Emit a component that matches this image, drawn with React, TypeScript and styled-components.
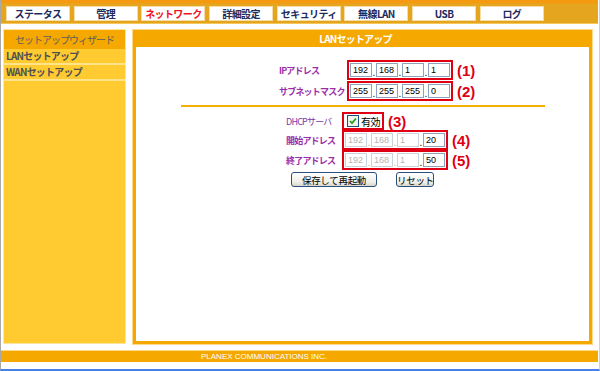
import React from "react";
import styled, { createGlobalStyle } from "styled-components";

const GlobalStyle = createGlobalStyle`
  html, body {
    margin: 0;
    padding: 0;
    background: #ffffff;
  }
  body {
    font-family: "Noto Sans CJK JP", "Liberation Sans", sans-serif;
    font-size: 10px;
    white-space: nowrap;
  }
`;

const jpFont = `"Noto Sans CJK JP", "Liberation Sans", sans-serif`;

const Page = styled.div`
  width: 600px;
  height: 371px;
  box-sizing: border-box;
  border-left: 1px solid #a8a8a8;
  border-right: 1px solid #d0d0d0;
  border-bottom: 2px solid #4a7ee8;
  display: flex;
  flex-direction: column;
  overflow: hidden;
`;

const TopBar = styled.div`
  height: 24px;
  margin-right: 1px;
  box-sizing: border-box;
  background: linear-gradient(#f39a10 0px, #f39a10 3px, #e6a620 4px, #e3a41e 100%);
  border-bottom: 1px solid #f7c65a;
  display: flex;
  gap: 3.7px;
  padding: 6px 0 0 5px;
`;

const Tab = styled.div<{ $active?: boolean }>`
  width: 64px;
  height: 15px;
  box-sizing: border-box;
  background: #ffffff;
  border: 1px solid #f6dca6;
  display: flex;
  align-items: center;
  justify-content: center;
  font-family: ${jpFont};
  font-size: 10px;
  font-weight: bold;
  letter-spacing: -0.6px;
  color: ${(p) => (p.$active ? "#ee1122" : "#1c2a5c")};
`;

const Content = styled.div`
  display: flex;
  gap: 6px;
  padding: 5px 0 0 2px;
  height: 316px;
  box-sizing: border-box;
`;

const Sidebar = styled.div`
  width: 123px;
  height: 315px;
  box-sizing: border-box;
  background: #ffcb30;
  border: 1px solid #ffe4a0;
  display: flex;
  flex-direction: column;
`;

const SideHeader = styled.div`
  height: 19px;
  background: #f5a800;
  display: flex;
  align-items: center;
  justify-content: center;
  color: #5e5e5e;
  font-size: 10px;
  letter-spacing: -1px;
`;

const SideItem = styled.div`
  height: 14px;
  line-height: 14px;
  padding-left: 2px;
  border-bottom: 2px solid #ffe48c;
  color: #505050;
  font-size: 10px;
  font-weight: bold;
  letter-spacing: -0.8px;
`;

const Panel = styled.div`
  width: 461px;
  height: 316px;
  box-sizing: border-box;
  background: #f5a800;
  border: 1px solid #ffd98a;
  display: flex;
  flex-direction: column;
`;

const PanelHeader = styled.div`
  height: 17px;
  display: flex;
  align-items: center;
  justify-content: center;
  padding-right: 14px;
  color: #ffffff;
  font-size: 10px;
  font-weight: bold;
  letter-spacing: -0.8px;
`;

const PanelBody = styled.div`
  flex: 1;
  margin: 0 3px 3px 3px;
  background: #ffffff;
  padding-top: 13px;
`;

const FormGrid = styled.div<{ $left: number; $labelW: number; $rowGap?: number }>`
  display: grid;
  grid-template-columns: ${(p) => p.$labelW}px auto;
  column-gap: 3px;
  row-gap: ${(p) => p.$rowGap ?? 1}px;
  align-items: center;
  padding-left: ${(p) => p.$left}px;
`;

const Label = styled.div<{ $light?: boolean }>`
  color: ${(p) => (p.$light ? "#7a3aa8" : "#9a2fa8")};
  font-size: 9px;
  letter-spacing: -0.8px;
  font-weight: ${(p) => (p.$light ? "normal" : "bold")};
`;

const Field = styled.div`
  display: flex;
  align-items: center;
  gap: 4px;
`;

const RedBox = styled.div`
  display: flex;
  align-items: center;
  box-sizing: border-box;
  height: 20px;
  border: 2px solid #e00014;
  padding: 0 1px;
`;

const Octet = styled.div<{ $disabled?: boolean }>`
  width: 22px;
  height: 14px;
  box-sizing: border-box;
  border: 1px solid ${(p) => (p.$disabled ? "#c9d3dd" : "#8ca3bf")};
  font-family: "Liberation Sans", sans-serif;
  font-size: 9px;
  line-height: 12px;
  padding-left: 2px;
  color: ${(p) => (p.$disabled ? "#b4b4b4" : "#000000")};
  background: #ffffff;
  overflow: hidden;
`;

const Dot = styled.span<{ $disabled?: boolean }>`
  width: 4px;
  align-self: flex-end;
  text-align: center;
  font-size: 10px;
  line-height: 10px;
  color: ${(p) => (p.$disabled ? "#b4b4b4" : "#000000")};
  font-family: "Liberation Sans", sans-serif;
`;

const Marker = styled.span`
  color: #e00014;
  font-family: "Liberation Sans", sans-serif;
  font-size: 15px;
  font-weight: bold;
  line-height: 15px;
`;

const Separator = styled.div`
  height: 2px;
  background: #f5b000;
  margin: 4px 44px 5px 45px;
`;

const CheckBox = styled.div`
  display: flex;
  align-items: center;
  gap: 2px;
  height: 18px;
  box-sizing: border-box;
  border: 2px solid #e00014;
  padding: 0 2px 0 3px;
  font-size: 10px;
  letter-spacing: -0.5px;
  color: #000000;
`;

const ButtonRow = styled.div`
  display: flex;
  justify-content: center;
  gap: 19px;
  margin-top: 2px;
`;

const Button = styled.button<{ $w: number }>`
  width: ${(p) => p.$w}px;
  height: 15px;
  padding: 0;
  border: 1px solid #2b4f7e;
  border-radius: 3px;
  background: linear-gradient(#ffffff, #f0efe8 70%, #d8d5c8);
  font-family: ${jpFont};
  font-size: 9.5px;
  line-height: 12px;
  letter-spacing: -0.3px;
  white-space: nowrap;
  color: #000000;
`;

const Footer = styled.div`
  margin: 10px 1px 0 0;
  height: 11px;
  background: #f5a800;
  border-top: 1px solid #ffd98a;
  color: #ffffff;
  font-family: "Liberation Sans", sans-serif;
  font-size: 8px;
  line-height: 11px;
  padding-left: 200px;
`;

const tabs = ["ステータス", "管理", "ネットワーク", "詳細設定", "セキュリティ", "無線LAN", "USB", "ログ"];

function CheckIcon() {
  return (
    <svg width="12" height="12" viewBox="0 0 12 12">
      <rect x="0.5" y="0.5" width="11" height="11" fill="#f2f2ee" stroke="#1c5180" />
      <path d="M3 6 L5 8.2 L9 3.5" fill="none" stroke="#21a121" strokeWidth="1.8" />
    </svg>
  );
}

function IpField({ values, disabled }: { values: string[]; disabled?: boolean }) {
  return (
    <RedBox>
      {values.map((v, i) => (
        <React.Fragment key={i}>
          {i > 0 && <Dot $disabled={disabled && i < 3}>.</Dot>}
          <Octet $disabled={disabled && i < 3}>{v}</Octet>
        </React.Fragment>
      ))}
    </RedBox>
  );
}

export default function App() {
  return (
    <>
      <GlobalStyle />
      <Page>
        <TopBar>
          {tabs.map((t) => (
            <Tab key={t} $active={t === "ネットワーク"}>
              {t}
            </Tab>
          ))}
        </TopBar>
        <Content>
          <Sidebar>
            <SideHeader>セットアップウィザード</SideHeader>
            <SideItem>LANセットアップ</SideItem>
            <SideItem>WANセットアップ</SideItem>
          </Sidebar>
          <Panel>
            <PanelHeader>LANセットアップ</PanelHeader>
            <PanelBody>
              <FormGrid $left={143} $labelW={65}>
                <Label>IPアドレス</Label>
                <Field>
                  <IpField values={["192", "168", "1", "1"]} />
                  <Marker>(1)</Marker>
                </Field>
                <Label>サブネットマスク</Label>
                <Field>
                  <IpField values={["255", "255", "255", "0"]} />
                  <Marker>(2)</Marker>
                </Field>
              </FormGrid>
              <Separator />
              <FormGrid $left={150} $labelW={53} $rowGap={0}>
                <Label $light>DHCPサーバ</Label>
                <Field>
                  <CheckBox>
                    <CheckIcon />
                    有効
                  </CheckBox>
                  <Marker>(3)</Marker>
                </Field>
                <Label>開始アドレス</Label>
                <Field>
                  <IpField values={["192", "168", "1", "20"]} disabled />
                  <Marker>(4)</Marker>
                </Field>
                <Label>終了アドレス</Label>
                <Field>
                  <IpField values={["192", "168", "1", "50"]} disabled />
                  <Marker>(5)</Marker>
                </Field>
              </FormGrid>
              <ButtonRow>
                <Button $w={86}>保存して再起動</Button>
                <Button $w={38}>リセット</Button>
              </ButtonRow>
            </PanelBody>
          </Panel>
        </Content>
        <Footer>PLANEX COMMUNICATIONS INC.</Footer>
      </Page>
    </>
  );
}
